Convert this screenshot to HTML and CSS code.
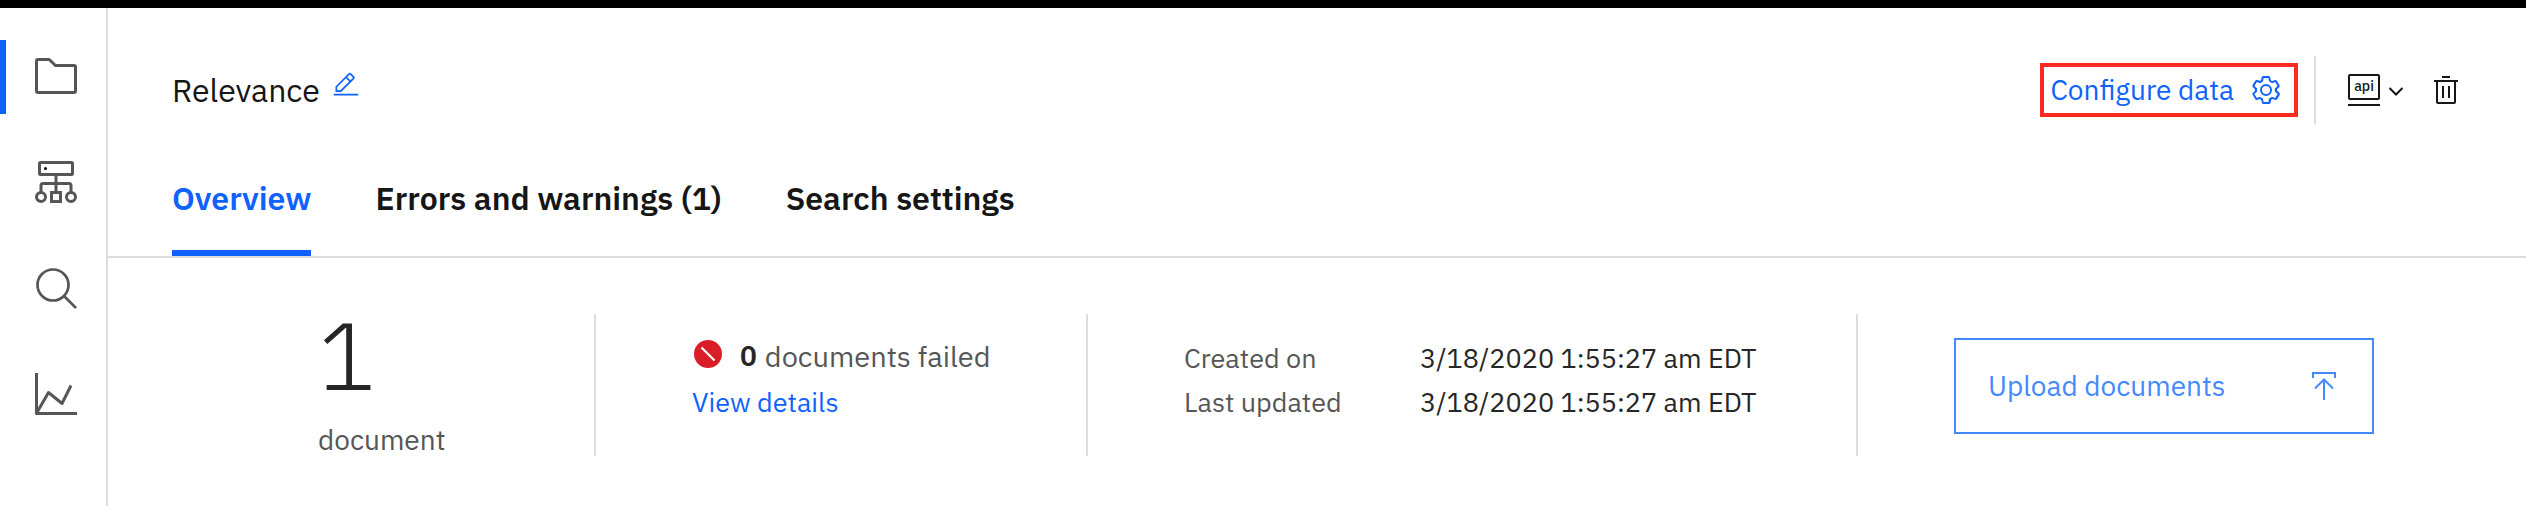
FILE: index.html
```html
<!DOCTYPE html>
<html lang="en">
<head>
<meta charset="utf-8">
<title>Relevance</title>
<link rel="stylesheet" href="styles.css">
</head>
<body>
<div class="app">
  <nav class="rail" aria-label="Main">
    <a class="rail-item rail-item-active" href="#" aria-label="Projects">
      <svg class="icon-lg" viewBox="0 0 32 32" fill="currentColor"><path d="M11.17,6l3.42,3.41.58.59H28V26H4V6h7.17m0-2H4A2,2,0,0,0,2,6V26a2,2,0,0,0,2,2H28a2,2,0,0,0,2-2V10a2,2,0,0,0-2-2H16L12.59,4.59A2,2,0,0,0,11.17,4Z"/></svg>
    </a>
    <a class="rail-item" href="#" aria-label="Data schema">
      <svg class="icon-lg" viewBox="0 0 48 48" fill="none" stroke="currentColor" stroke-width="3"><rect x="7.500" y="4.500" width="33" height="12" rx="1"/><path d="M24 17V33M9 34V27.500Q9 25.500 11 25.500H37Q39 25.500 39 27.500V34"/><circle cx="9" cy="39" r="4.500"/><circle cx="39" cy="39" r="4.500"/><rect x="19.500" y="34.500" width="9" height="9"/><circle cx="13.500" cy="10.500" r="1.500" fill="#000" stroke="none"/></svg>
    </a>
    <a class="rail-item" href="#" aria-label="Search">
      <svg class="icon-lg" viewBox="0 0 48 48" fill="none" stroke="currentColor" stroke-width="2.700"><circle cx="21" cy="21" r="15.500"/><path d="M32 32L44 44"/></svg>
    </a>
    <a class="rail-item" href="#" aria-label="Analytics">
      <svg class="icon-lg" viewBox="0 0 48 48" fill="none" stroke="currentColor" stroke-width="3" stroke-linejoin="round"><path d="M4.500 3V43.500H45"/><path d="M5.500 41.500L16.500 22.500L30 33.500L39 15.500"/></svg>
    </a>
  </nav>
  <main class="main">
    <header class="header">
      <h1 class="title">Relevance</h1>
      <button class="icon-button edit" aria-label="Edit name">
        <svg class="icon-sm" viewBox="0 0 16 16" fill="currentColor"><path d="M1 13H15V14H1zM12.700 4.500c.4-.4.4-1 0-1.400l-1.800-1.800c-.4-.4-1-.4-1.400 0L2 8.800V12h3.200zM10.200 2L12 3.800l-1.500 1.500L8.700 3.500zM3 11V9.200l5-5L9.800 6l-5 5z" fill-rule="evenodd"/></svg>
      </button>
      <div class="actions">
        <button class="configure">Configure data
          <svg class="icon-md" viewBox="0 0 16 16" fill="currentColor" fill-rule="evenodd"><path d="M13.5,8.4c0-0.1,0-0.3,0-0.4c0-0.1,0-0.3,0-0.4l1-0.8c0.4-0.3,0.4-0.9,0.2-1.3l-1.2-2C13.3,3.2,13,3,12.6,3c-0.1,0-0.2,0-0.3,0.1l-1.2,0.4c-0.2-0.1-0.4-0.3-0.7-0.4l-0.3-1.3C10.1,1.3,9.7,1,9.2,1H6.8c-0.5,0-0.9,0.3-1,0.8L5.6,3.1C5.3,3.2,5.1,3.3,4.9,3.4L3.7,3C3.6,3,3.5,3,3.4,3C3,3,2.7,3.2,2.5,3.5l-1.2,2C1.1,5.9,1.2,6.4,1.6,6.8l0.9,0.9c0,0.1,0,0.3,0,0.4c0,0.1,0,0.3,0,0.4L1.6,9.2c-0.4,0.3-0.5,0.9-0.2,1.3l1.2,2C2.7,12.8,3,13,3.4,13c0.1,0,0.2,0,0.3-0.1l1.2-0.4c0.2,0.1,0.4,0.3,0.7,0.4l0.3,1.3c0.1,0.5,0.5,0.8,1,0.8h2.4c0.5,0,0.9-0.3,1-0.8l0.3-1.3c0.2-0.1,0.4-0.2,0.7-0.4l1.2,0.4c0.1,0,0.2,0.1,0.3,0.1c0.4,0,0.7-0.2,0.9-0.5l1.1-2c0.2-0.4,0.2-0.9-0.2-1.3L13.5,8.4z M12.6,12l-1.7-0.6c-0.4,0.3-0.9,0.6-1.4,0.8L9.2,14H6.8l-0.4-1.8c-0.5-0.2-0.9-0.5-1.4-0.8L3.4,12l-1.2-2l1.4-1.2c-0.1-0.5-0.1-1.1,0-1.6L2.2,6l1.2-2l1.7,0.6C5.5,4.2,6,4,6.5,3.8L6.8,2h2.4l0.4,1.8c0.5,0.2,0.9,0.5,1.4,0.8L12.6,4l1.2,2l-1.4,1.2c0.1,0.5,0.1,1.1,0,1.6l1.4,1.2L12.6,12z"/><circle cx="8" cy="8" r="2.500" fill="none" stroke="currentColor"/></svg>
        </button>
        <span class="divider"></span>
        <button class="icon-button api" aria-label="API details">
          <svg class="icon-md" viewBox="0 0 32 32" fill="none" stroke="currentColor" stroke-width="2"><rect x="1" y="1" width="30" height="24" rx="1"/><path d="M0 31H32"/><text class="api-text" x="16" y="17" text-anchor="middle">api</text></svg>
          <svg class="icon-chevron" viewBox="0 0 16 32" fill="none" stroke="currentColor" stroke-width="2"><path d="M1.500 14L8 20.500L14.500 14"/></svg>
        </button>
        <button class="icon-button" aria-label="Delete">
          <svg class="icon-md" viewBox="0 0 16 16" fill="currentColor"><path fill-rule="evenodd" d="M6 6H7V12H6zM9 6H10V12H9zM2 3V4H3V14a1 1 0 0 0 1 1h8a1 1 0 0 0 1-1V4h1V3zM4 14V4H12V14zM6 1H10V2H6z"/></svg>
        </button>
      </div>
    </header>
    <div class="tabs" role="tablist">
      <button class="tab tab-active" role="tab" aria-selected="true">Overview</button>
      <button class="tab" role="tab" aria-selected="false">Errors and warnings (1)</button>
      <button class="tab" role="tab" aria-selected="false">Search settings</button>
    </div>
    <section class="stats">
      <div class="stat stat-count">
        <div class="count">1</div>
        <div class="label">document</div>
      </div>
      <div class="stat">
        <div class="failed">
          <svg class="icon-fail" viewBox="0 0 28 28"><circle cx="14" cy="14" r="14" fill="#da1e28"/><path d="M7.500 7.500L20.500 20.500" stroke="#fff" stroke-width="2.200"/></svg>
          <strong class="failed-count">0</strong>
          <span class="label">documents failed</span>
        </div>
        <a class="link" href="#">View details</a>
      </div>
      <div class="stat">
        <dl class="dates">
          <dt class="label">Created on</dt><dd class="value">3/18/2020 1:55:27 am EDT</dd>
          <dt class="label">Last updated</dt><dd class="value">3/18/2020 1:55:27 am EDT</dd>
        </dl>
      </div>
      <div class="stat">
        <button class="upload">Upload documents
          <svg class="icon-md" viewBox="0 0 32 32" fill="none" stroke="currentColor" stroke-width="2"><path d="M5 8V3H27V8M16 9V30M7 18.500L16 9.500L25 18.500"/></svg>
        </button>
      </div>
    </section>
  </main>
</div>
</body>
</html>
```
FILE: styles.css
```css
* { box-sizing: border-box; }
body {
  margin: 0;
  background: #fff;
  color: #161616;
  font-family: "IBM Plex Sans", Roboto, sans-serif;
  font-size: 28px;
  line-height: 44px;
}
button {
  padding: 0;
  border: 0;
  background: none;
  color: inherit;
  font: inherit;
  cursor: pointer;
}
svg { display: block; flex: none; }
.app {
  display: flex;
  min-height: 100vh;
  border-top: 8px solid #000;
}
.rail {
  display: flex;
  flex-direction: column;
  gap: 32px;
  width: 108px;
  flex: none;
  padding-top: 32px;
  border-right: 2px solid #dcdcdc;
}
.rail-item {
  height: 74px;
  padding: 12px 26px;
  border-left: 6px solid transparent;
  color: #565656;
}
.rail-item-active { border-left-color: #0f62fe; }
.icon-lg { width: 48px; height: 48px; }
.icon-md { width: 32px; height: 32px; }
.icon-sm { width: 28px; height: 28px; }
.icon-chevron { width: 16px; height: 32px; }
.icon-fail { width: 28px; height: 28px; margin: 0 0 4px 2px; }
.main { flex: 1; min-width: 0; }
.header {
  display: flex;
  align-items: center;
  height: 164px;
  padding: 0 64px;
}
.title {
  margin: 0;
  font-size: 32px;
  font-weight: 400;
}
.edit {
  margin-left: 12px;
  padding-bottom: 10px;
  color: #0f62fe;
}
.actions {
  display: flex;
  align-items: center;
  margin-left: auto;
}
.configure {
  display: flex;
  align-items: center;
  gap: 16px;
  height: 54px;
  padding: 0 12px 0 6px;
  border: 4px solid #ff2a1f;
  color: #0f62fe;
}
.divider {
  width: 2px;
  height: 68px;
  margin: 0 32px 0 16px;
  background: #dcdcdc;
}
.icon-button { display: flex; }
.api { gap: 8px; margin-right: 26px; }
.api-text {
  fill: currentColor;
  stroke: none;
  font-size: 14px;
  font-weight: 500;
}
.tabs {
  display: flex;
  gap: 64px;
  padding: 0 64px;
  border-bottom: 2px solid #dcdcdc;
}
.tab {
  height: 84px;
  padding-bottom: 26px;
  border-bottom: 6px solid transparent;
  font-size: 32px;
  font-weight: 600;
}
.tab-active {
  border-bottom-color: #0f62fe;
  color: #0f62fe;
}
.stats {
  display: grid;
  grid-template-columns: 488fr 492fr 770fr 668fr;
  padding-top: 56px;
}
.stat {
  height: 142px;
  padding: 20px 0 0 96px;
  border-right: 2px solid #dcdcdc;
}
.stat:last-child { border-right: 0; padding-top: 24px; }
.stat-count { padding: 0 0 0 210px; }
.count {
  color: #262626;
  font-size: 96px;
  font-weight: 300;
  line-height: 80px;
  margin-bottom: 24px;
}
.label { color: #565656; }
.failed { display: flex; align-items: center; }
.failed .label { font-size: 29px; }
.failed-count { margin: 0 8px 0 18px; color: #262626; font-weight: 600; }
.link {
  display: block;
  color: #0f62fe;
  font-size: 27px;
  line-height: 48px;
  text-decoration: none;
}
.dates {
  display: grid;
  grid-template-columns: 236px auto;
  margin: 0;
  padding-top: 2px;
  font-size: 27px;
}
.value { margin: 0; color: #262626; white-space: nowrap; }
.upload {
  display: flex;
  align-items: center;
  justify-content: space-between;
  width: 420px;
  height: 96px;
  padding: 0 32px;
  border: 2px solid #4589ff;
  color: #4589ff;
}
```
